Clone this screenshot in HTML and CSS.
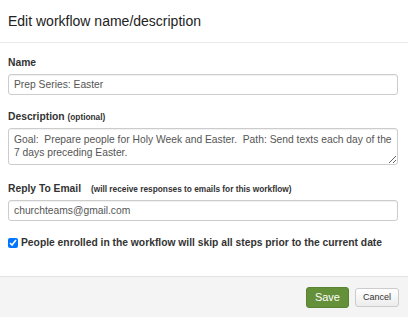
FILE: index.html
```html
<!DOCTYPE html>
<html lang="en">
<head>
  <meta charset="UTF-8" />
  <title>Edit workflow</title>
  <link rel="stylesheet" href="styles.css">
</head>
<body>
  <div class="modal">
    <div class="modal-header">
      <h4 class="modal-title">Edit workflow name/description</h4>
    </div>

    <div class="modal-body">
      <div class="field">
        <label for="wf-name">Name</label>
        <input type="text" id="wf-name" value="Prep Series: Easter" />
      </div>

      <div class="field field-tall">
        <label for="wf-desc">Description <small>(optional)</small></label>
        <textarea id="wf-desc">Goal:  Prepare people for Holy Week and Easter.  Path: Send texts each day of the 7 days preceding Easter.</textarea>
      </div>

      <div class="field">
        <label for="wf-email">Reply To Email <small class="hint">(will receive responses to emails for this workflow)</small></label>
        <input type="text" id="wf-email" value="churchteams@gmail.com" />
      </div>

      <label class="check">
        <input type="checkbox" checked />
        People enrolled in the workflow will skip all steps prior to the current date
      </label>
    </div>

    <div class="modal-footer">
      <button class="btn btn-save">Save</button>
      <button class="btn btn-cancel">Cancel</button>
    </div>
  </div>
</body>
</html>
```

FILE: styles.css
```css
/* Modal para editar el workflow */
body {
  margin: 0;
  background: #fff;
  color: #333;
  font-family: 'Liberation Sans', Arial, sans-serif;
  font-size: 10.3px;
}

.modal {
  width: 408px;
  height: 317px;
  display: flex;
  flex-direction: column;
}

.modal-header {
  height: 42px;
  padding: 0 8px;
  border-bottom: 1px solid #ececec;
  display: flex;
  align-items: center;
}

.modal-title {
  margin: 0;
  font-size: 14px;
  font-weight: normal;
  color: #222;
}

.modal-body {
  flex: 1;
  padding: 14px 10px 0 8px;
}

.field {
  display: flex;
  flex-direction: column;
  gap: 5px;
  margin-bottom: 16px;
}

.field-tall {
  margin-bottom: 18px;
}

.field label {
  font-weight: bold;
  font-size: 10.3px;
  line-height: 12px;
}

.field small {
  font-size: 8.3px;
}

.field .hint {
  margin-left: 7px;
}

input[type="text"], textarea {
  box-sizing: border-box;
  width: 100%;
  border: 1px solid #ccc;
  border-radius: 3px;
  box-shadow: inset 0 1px 1px rgba(0,0,0,0.06);
  color: #555;
  font-family: 'Liberation Sans', Arial, sans-serif;
  font-size: 10.3px;
  padding: 0 5px;
  margin: 0;
}

input[type="text"] {
  height: 21px;
}

textarea {
  height: 37px;
  padding: 4px 5px;
  line-height: 13px;
  resize: vertical;
}

.check {
  display: flex;
  align-items: center;
  gap: 3px;
  margin-top: 1px;
  font-weight: bold;
  font-size: 10.3px;
  line-height: 12px;
}

.check input {
  margin: 0;
  width: 10px;
  height: 10px;
}

.modal-footer {
  height: 40px;
  background: #f4f4f4;
  border-top: 1px solid #e3e3e3;
  display: flex;
  justify-content: flex-end;
  align-items: center;
  gap: 6px;
  padding: 0 9px;
}

.btn {
  font-family: 'Liberation Sans', Arial, sans-serif;
  border-radius: 3px;
  cursor: pointer;
}

.btn-save {
  height: 21px;
  padding: 0 8px;
  font-size: 11px;
  background: #65903a;
  border: 1px solid #5a8233;
  color: #fff;
}

.btn-cancel {
  height: 19px;
  padding: 0 7px;
  font-size: 9px;
  background: linear-gradient(#fff, #ececec);
  border: 1px solid #ccc;
  color: #333;
}
```
